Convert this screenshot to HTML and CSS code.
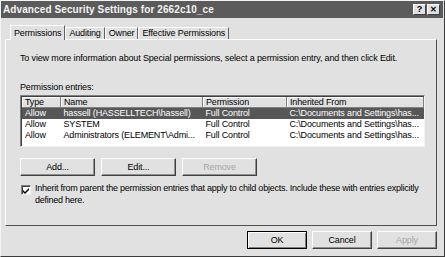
FILE: index.html
```html
<!DOCTYPE html>
<html lang="en">
<head>
    <meta charset="UTF-8">
    <title>Advanced Security Settings</title>
    <link rel="stylesheet" href="styles.css">
</head>
<body>
    <div class="window">
        <div class="titlebar">
            <span class="title">Advanced Security Settings for 2662c10_ce</span>
            <div class="caption-btns">
                <span class="cbtn">?</span>
                <span class="cbtn close">&#x2715;</span>
            </div>
        </div>
        <div class="tabs">
            <span class="tab active">Permissions</span>
            <span class="tab">Auditing</span>
            <span class="tab">Owner</span>
            <span class="tab">Effective Permissions</span>
        </div>
        <div class="panel">
            <p class="intro">To view more information about Special permissions, select a permission entry, and then click Edit.</p>
            <div class="list-label">Permission entries:</div>
            <div class="listbox">
                <table>
                    <thead>
                        <tr>
                            <th class="c-type">Type</th>
                            <th class="c-name">Name</th>
                            <th class="c-perm">Permission</th>
                            <th class="c-inh">Inherited From</th>
                        </tr>
                    </thead>
                    <tbody>
                        <tr class="selected">
                            <td>Allow</td>
                            <td>hassell (HASSELLTECH\hassell)</td>
                            <td>Full Control</td>
                            <td>C:\Documents and Settings\has...</td>
                        </tr>
                        <tr>
                            <td>Allow</td>
                            <td>SYSTEM</td>
                            <td>Full Control</td>
                            <td>C:\Documents and Settings\has...</td>
                        </tr>
                        <tr>
                            <td>Allow</td>
                            <td>Administrators (ELEMENT\Admi...</td>
                            <td>Full Control</td>
                            <td>C:\Documents and Settings\has...</td>
                        </tr>
                    </tbody>
                </table>
            </div>
            <div class="btn-row">
                <button class="btn wide">Add...</button>
                <button class="btn wide">Edit...</button>
                <button class="btn wide" disabled>Remove</button>
            </div>
            <label class="inherit">
                <span class="check">
                    <svg width="7" height="7" viewBox="0 0 7 7"><path d="M0 3 L2 5 L6 1 L6 3 L2 7 L0 5 Z" fill="#000"/></svg>
                </span>
                <span>Inherit from parent the permission entries that apply to child objects. Include these with entries explicitly defined here.</span>
            </label>
        </div>
        <div class="footer">
            <button class="btn default">OK</button>
            <button class="btn">Cancel</button>
            <button class="btn" disabled>Apply</button>
        </div>
    </div>
</body>
</html>
```

FILE: styles.css
```css
body {
    margin: 0;
    font-family: "Liberation Sans", Arial, sans-serif;
    font-size: 9px;
    letter-spacing: -0.15px;
    color: #000;
    background: #e1e1e1;
}

.window {
    width: 445px;
    height: 257px;
    box-sizing: border-box;
    background: #e1e1e1;
    border: 1px solid #f4f4f4;
    border-right-color: #3c3c3c;
    border-bottom-color: #3c3c3c;
    padding: 0 1px 0 0;
}

.titlebar {
    height: 17px;
    background: #5b5b5b;
    display: flex;
    align-items: center;
    justify-content: space-between;
    padding: 0 3px 0 2px;
}

.title {
    color: #f4f4f4;
    font-weight: bold;
    font-size: 10px;
    letter-spacing: 0.1px;
}

.caption-btns {
    display: flex;
    gap: 1px;
}

.cbtn {
    width: 11px;
    height: 9px;
    background: #e1e1e1;
    border: 1px solid #fff;
    border-right-color: #404040;
    border-bottom-color: #404040;
    font-weight: bold;
    font-size: 9px;
    line-height: 9px;
    text-align: center;
}

.close {
    font-size: 8px;
}

.tabs {
    display: flex;
    margin: 6px 0 0 9px;
    height: 15px;
    align-items: flex-end;
    position: relative;
    z-index: 1;
}

.tab {
    height: 11px;
    line-height: 11px;
    padding: 0 3px;
    border: 1px solid #fff;
    border-bottom: none;
    border-right-color: #606060;
}

.tab.active {
    height: 14px;
    line-height: 14px;
    background: #e1e1e1;
    padding: 0 3px;
    margin-bottom: -1px;
}

.panel {
    margin: 0 6px 0 4px;
    height: 187px;
    box-sizing: border-box;
    border: 1px solid #fff;
    border-right-color: #505050;
    border-bottom-color: #505050;
    padding: 12px 11px 0 14px;
}

.intro {
    margin: 0;
    line-height: 12px;
}

.list-label {
    margin-top: 17px;
    line-height: 12px;
}

.listbox {
    margin-top: 2px;
    height: 52px;
    box-sizing: border-box;
    background: #fff;
    border: 1px solid #808080;
    border-right-color: #f0f0f0;
    border-bottom-color: #f0f0f0;
    box-shadow: inset 1px 1px 0 #404040;
    padding: 1px 0 0 1px;
}

table {
    border-collapse: collapse;
    width: 100%;
    table-layout: fixed;
}

th {
    font-weight: normal;
    text-align: left;
    background: #e1e1e1;
    height: 10px;
    line-height: 10px;
    padding: 0 0 0 3px;
    border-right: 1px solid #808080;
    border-bottom: 1px solid #808080;
    box-shadow: inset 1px 1px 0 #fff;
}

.c-type { width: 35px; }
.c-name { width: 138px; }
.c-perm { width: 80px; }

td {
    height: 11px;
    line-height: 11px;
    padding: 0 0 0 3px;
    white-space: nowrap;
    overflow: hidden;
}

tr.selected td {
    background: #575757;
    color: #fff;
}

.btn-row {
    display: flex;
    gap: 6px;
    margin-top: 11px;
}

.btn {
    font-family: inherit;
    font-size: 9px;
    letter-spacing: -0.15px;
    height: 18px;
    width: 60px;
    padding: 0;
    background: #e1e1e1;
    color: #000;
    border: 1px solid #fff;
    border-right-color: #404040;
    border-bottom-color: #404040;
    box-shadow: inset -1px -1px 0 #909090;
}

.btn.wide {
    width: 75px;
}

.btn:disabled {
    color: #a8a8a8;
}

.btn.default {
    border: 1px solid #000;
    box-shadow: inset 1px 1px 0 #fff, inset -1px -1px 0 #808080;
}

.inherit {
    display: flex;
    gap: 4px;
    margin-top: 6px;
    padding-left: 1px;
    line-height: 12px;
    letter-spacing: -0.25px;
}

.check {
    flex: none;
    width: 8px;
    height: 8px;
    margin-top: 3px;
    background: #fff;
    border: 1px solid #808080;
    border-right-color: #f0f0f0;
    border-bottom-color: #f0f0f0;
    box-shadow: inset 1px 1px 0 #404040;
    display: flex;
    align-items: center;
    justify-content: center;
}

.footer {
    display: flex;
    justify-content: flex-end;
    gap: 5px;
    margin: 5px 6px 0 0;
}
```
